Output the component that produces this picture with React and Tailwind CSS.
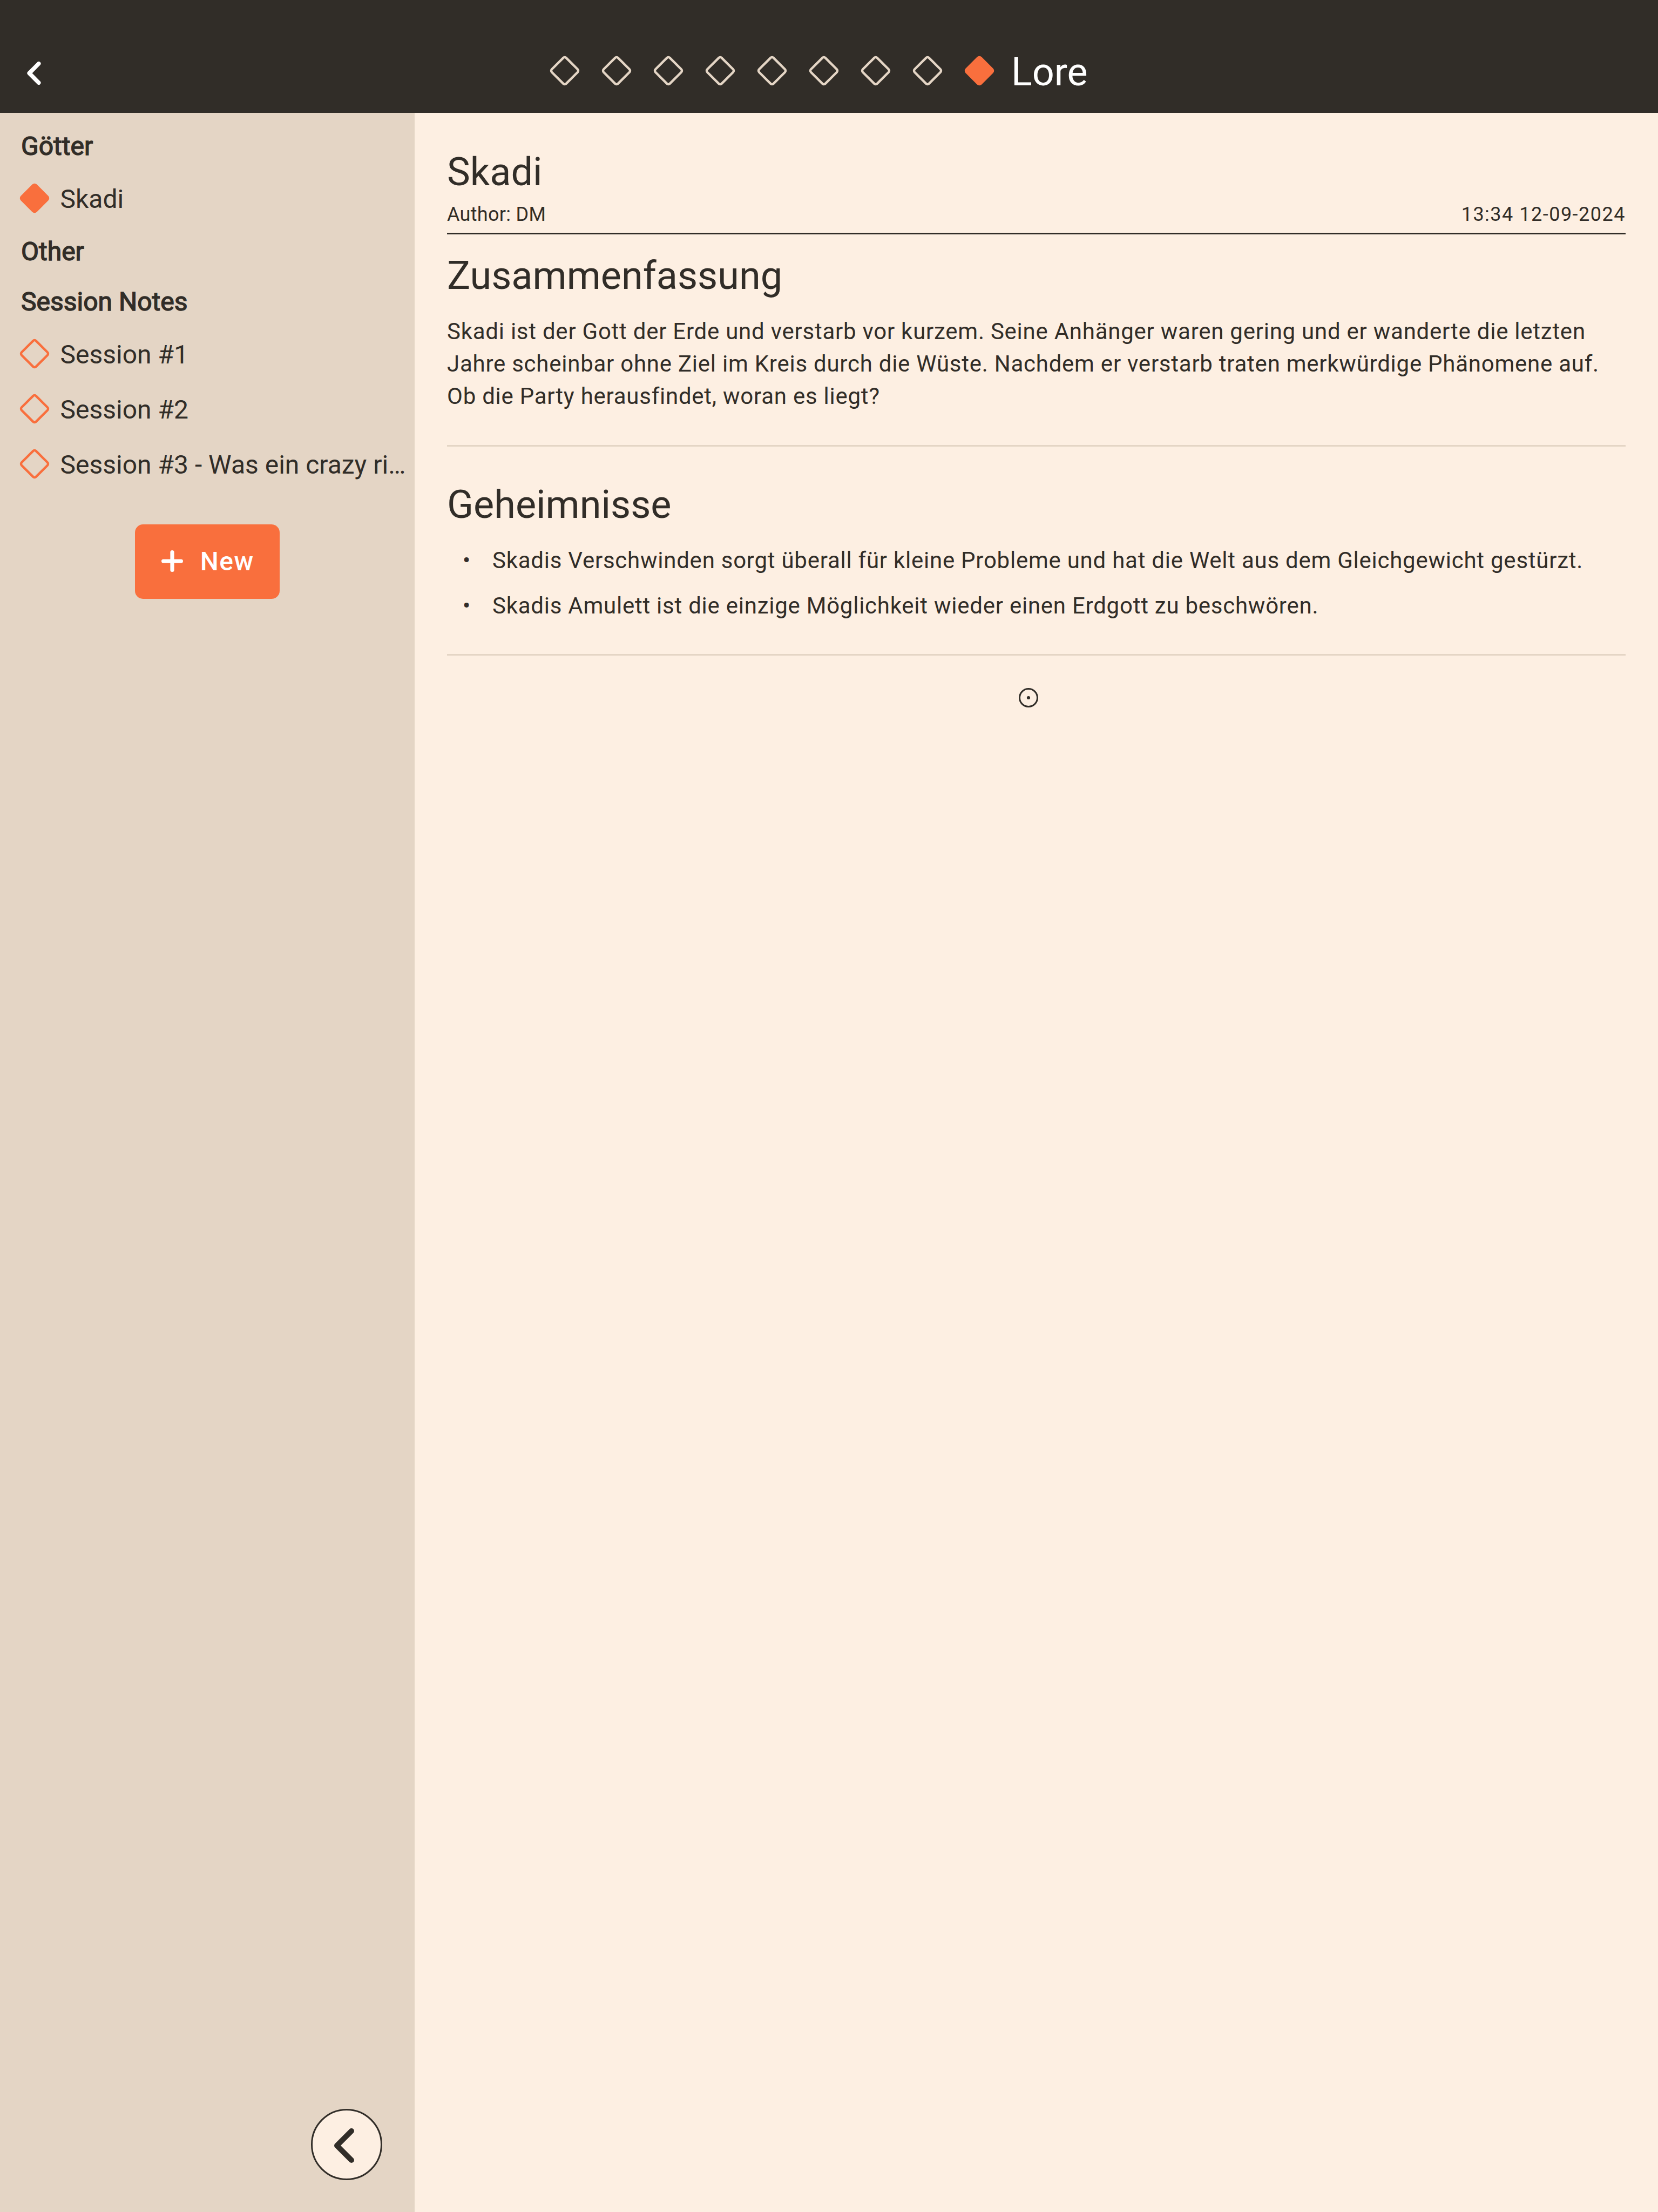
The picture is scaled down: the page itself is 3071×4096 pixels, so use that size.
function Diamond({ className, filled }) {
  return (
    <svg className={className} viewBox="0 0 60 60" fill="none">
      {filled ? (
        <rect x="9" y="9" width="42" height="42" rx="6" transform="rotate(45 30 30)" fill="currentColor" />
      ) : (
        <rect x="11.2" y="11.2" width="37.6" height="37.6" rx="3.8" transform="rotate(45 30 30)" stroke="currentColor" strokeWidth="4.4" />
      )}
    </svg>
  );
}

function Heading({ children }) {
  return (
    <h3 className="h-[93px] pt-[18px] pl-[39px] text-[48px] leading-[60px] [-webkit-text-stroke:1.4px_#312d28]">
      {children}
    </h3>
  );
}

function Item({ children, active }) {
  return (
    <div className="flex h-[102px] items-center pl-[34px]">
      <Diamond className="size-[60px] shrink-0 text-[#f96f3d]" filled={active} />
      <span className="ml-[17.5px] pt-[3px] text-[48px] leading-[60px] whitespace-nowrap">{children}</span>
    </div>
  );
}

function Bullet({ children }) {
  return (
    <li className="flex h-[84px]">
      <span className="ml-[29px] w-[55px] shrink-0">•</span>
      <span>{children}</span>
    </li>
  );
}

export default function App() {
  return (
    <div className="flex h-[4096px] w-[3071px] flex-col overflow-hidden bg-[#fdefe2] font-['Roboto',sans-serif] text-[#312d28]">
      <header className="flex h-[209px] shrink-0 items-start bg-[#312d28] pt-[98px] pl-[50px]">
        <svg className="mt-[16px] h-[43px] w-[26px] shrink-0 text-white" viewBox="0 0 26 43" fill="none" stroke="currentColor" strokeWidth="7.6" strokeLinecap="round" strokeLinejoin="round">
          <path d="M21.7 3.8L4.2 21.5l17.5 17.7" />
        </svg>
        <div className="ml-[940px] flex items-start gap-[36px] pt-[3.4px] text-[#e4d5c5]">
          {[0, 1, 2, 3, 4, 5, 6, 7].map((i) => (
            <Diamond key={i} className="size-[60px]" />
          ))}
          <Diamond filled className="size-[60px] text-[#f96f3d]" />
        </div>
        <h1 className="ml-[29px] text-[72px] leading-[72px] text-white">Lore</h1>
      </header>
      <div className="flex min-h-0 flex-1">
        <aside className="relative w-[768px] shrink-0 bg-[#e4d5c5] pt-[14px]">
          <Heading>Götter</Heading>
          <Item active>Skadi</Item>
          <Heading>Other</Heading>
          <Heading>Session Notes</Heading>
          <Item>Session #1</Item>
          <Item>Session #2</Item>
          <Item>Session #3 - Was ein crazy ri…</Item>
          <button className="mx-auto mt-[61px] flex h-[138px] w-[268px] items-center rounded-[15px] bg-[#f96f3d] pl-[49px] text-white">
            <svg className="-mt-[2px] size-[40px]" viewBox="0 0 40 40" fill="none" stroke="currentColor" strokeWidth="7.2" strokeLinecap="round">
              <path d="M20 3.6v32.8M3.6 20h32.8" />
            </svg>
            <span className="ml-[31.7px] text-[48px] leading-[60px] font-medium tracking-[1.5px]">New</span>
          </button>
          <button className="absolute bottom-[59px] left-[576px] flex size-[132px] items-center rounded-full border-[3px] border-[#312d28] bg-[#fdefe2] pl-[40px]">
            <svg className="mt-[3px] h-[64px] w-[37px]" viewBox="0 0 37 64" fill="none" stroke="currentColor" strokeWidth="10" strokeLinecap="round" strokeLinejoin="round">
              <path d="M32 5L5 32l27 27" />
            </svg>
          </button>
        </aside>
        <main className="flex-1 px-[60px] pt-[68px]">
          <h2 className="text-[72px] leading-[84px]">Skadi</h2>
          <div className="mt-[13px] flex h-[60px] justify-between border-b-[3px] border-[#312d28] pt-[2px] text-[36px] leading-[42px]">
            <span className="tracking-[0.3px]">Author: DM</span>
            <span className="tracking-[1.5px]">13:34 12-09-2024</span>
          </div>
          <h2 className="mt-[35px] text-[72px] leading-[84px]">Zusammenfassung</h2>
          <p className="mt-[31px] text-[42px] leading-[60px] tracking-[0.75px]">
            Skadi ist der Gott der Erde und verstarb vor kurzem. Seine Anhänger waren gering und er wanderte die letzten
            <br />
            Jahre scheinbar ohne Ziel im Kreis durch die Wüste. Nachdem er verstarb traten merkwürdige Phänomene auf.
            <br />
            Ob die Party herausfindet, woran es liegt?
          </p>
          <hr className="mt-[60px] border-t-[3px] border-[#e4d5c5]" />
          <h2 className="mt-[66px] text-[72px] leading-[84px]">Geheimnisse</h2>
          <ul className="mt-[31px] text-[42px] leading-[60px] tracking-[0.75px]">
            <Bullet>Skadis Verschwinden sorgt überall für kleine Probleme und hat die Welt aus dem Gleichgewicht gestürzt.</Bullet>
            <Bullet>Skadis Amulett ist die einzige Möglichkeit wieder einen Erdgott zu beschwören.</Bullet>
          </ul>
          <hr className="mt-[35px] border-t-[3px] border-[#e4d5c5]" />
          <svg className="mt-[60px] ml-[1059px] size-[36px]" viewBox="0 0 36 36" fill="none">
            <circle cx="18" cy="18" r="16.5" stroke="currentColor" strokeWidth="3" />
            <circle cx="18" cy="18" r="3.1" fill="currentColor" />
          </svg>
        </main>
      </div>
    </div>
  );
}
